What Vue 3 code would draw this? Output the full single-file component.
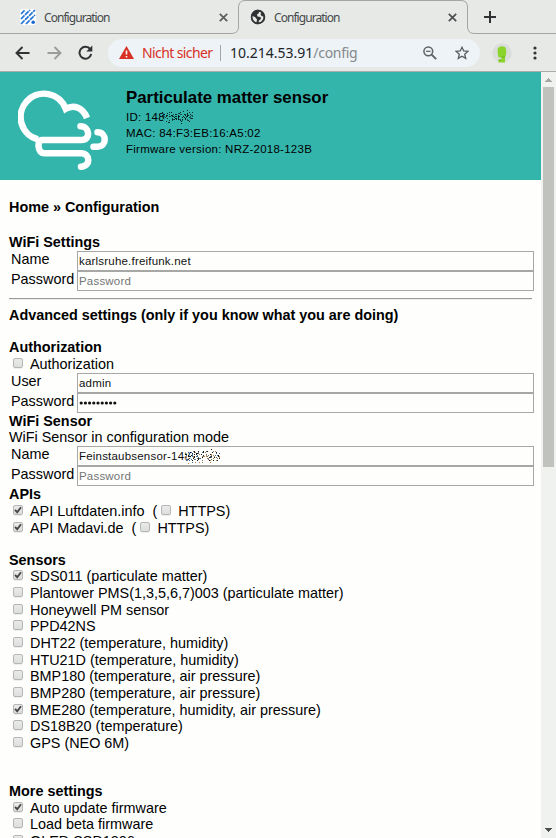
<script setup>
const sensors = [
  { label: 'SDS011 (particulate matter)', on: true },
  { label: 'Plantower PMS(1,3,5,6,7)003 (particulate matter)' },
  { label: 'Honeywell PM sensor' },
  { label: 'PPD42NS' },
  { label: 'DHT22 (temperature, humidity)' },
  { label: 'HTU21D (temperature, humidity)' },
  { label: 'BMP180 (temperature, air pressure)' },
  { label: 'BMP280 (temperature, air pressure)' },
  { label: 'BME280 (temperature, humidity, air pressure)', on: true },
  { label: 'DS18B20 (temperature)' },
  { label: 'GPS (NEO 6M)' },
]
const more = [
  { label: 'Auto update firmware', on: true },
  { label: 'Load beta firmware' },
  { label: 'OLED SSD1306' },
]
const apis = ['API Luftdaten.info', 'API Madavi.de']

// Speckles that hide the last digits of the device id
function speckles(w, h, count, seed, colors) {
  let s = seed
  const next = () => (s = (s * 16807) % 2147483647) / 2147483647
  return Array.from({ length: count }, () => {
    const x = Math.floor(next() * w)
    const y = Math.floor(((next() + next()) / 2) * h)
    return { x, y, c: colors[Math.floor(next() * colors.length)] }
  })
}
const headDots = speckles(31, 14, 165, 71, ['#08201e', '#0b2b28', '#34b5ac', '#17544f'])
const fieldDots = speckles(35, 15, 230, 913, ['#111', '#222', '#fff', '#fff', '#426a9a', '#b58250', '#777'])
</script>

<template>
  <div class="window">
    <div class="tabs">
      <svg class="tabline" width="556" height="34" fill="none" stroke="#a5a6a4">
        <path d="M0 33.5H232Q238.500 33 238.500 27V7Q239 .5 245 .5H461Q467.500 .5 467.500 7V27Q468 33.500 474 33.500H556" />
      </svg>
      <div class="tab first">
        <svg width="16" height="16" viewBox="0 0 16 16">
          <rect width="16" height="16" rx="2" fill="#fff" />
          <path d="M1 5L5 1M1 10L10 1M1 15L15 1M6 15L15 6" stroke="#2374d5" stroke-width="1.700" stroke-dasharray="5 .7" />
          <circle cx="13.200" cy="13.200" r="1.800" fill="#1769d0" />
        </svg>
        <span class="tabtitle">Configuration</span>
        <svg class="close" width="9" height="9" viewBox="0 0 9 9"><path d="M.8.8L8.200 8.200M8.200.8L.8 8.200" stroke="#5b5d5d" stroke-width="1.700" /></svg>
      </div>
      <div class="tab second">
        <svg width="16" height="16" viewBox="0 0 16 16">
          <circle cx="8" cy="8" r="7.200" fill="#303234" />
          <path d="M8.800 2.200L9 4L7 5.500L7.500 7.500L10.500 8L11 10L9 11.500L8.500 13.500L11 13L13.500 10V7.500L11.500 7L10.500 5L11.500 3.500ZM2 7L5 8L7 10.500L6.500 13.500L4 12.500L2.200 9.500Z" fill="#e7e9e6" />
          <circle cx="8" cy="8" r="6.400" fill="none" stroke="#303234" stroke-width="1.600" />
        </svg>
        <span class="tabtitle">Configuration</span>
        <svg class="close" width="9" height="9" viewBox="0 0 9 9"><path d="M.8.8L8.200 8.200M8.200.8L.8 8.200" stroke="#4c4e4f" stroke-width="1.700" /></svg>
      </div>
      <svg class="plus" width="12" height="12"><path d="M6 0V12M0 6H12" stroke="#303234" stroke-width="2" /></svg>
    </div>

    <div class="toolbar">
      <svg class="nav" width="15" height="14" viewBox="0 0 15 14" fill="none" stroke="#303234" stroke-width="1.900"><path d="M14.500 7H1.500M7.500 1L1.500 7L7.500 13" /></svg>
      <svg class="nav fwd" width="15" height="14" viewBox="0 0 15 14" fill="none" stroke="#9b9d9b" stroke-width="1.900"><path d="M.5 7H13.500M7.500 1L13.500 7L7.500 13" /></svg>
      <svg class="nav reload" width="15" height="15" viewBox="0 0 15 15"><path d="M12.300 4.400A5.900 5.900 0 1 0 13.200 9" fill="none" stroke="#303234" stroke-width="2" /><path d="M14.300.5V6.500H8.300Z" fill="#303234" /></svg>
      <div class="omnibox">
        <svg width="15" height="13" viewBox="0 0 15 13"><path d="M7.500 0L15 13H0Z" fill="#d93025" /><path d="M7.500 4.500V8.500M7.500 10V11.500" stroke="#fff" stroke-width="1.600" /></svg>
        <span class="warn">Nicht sicher</span>
        <span class="divider"></span>
        <span class="url">10.214.53.91<span>/config</span></span>
        <svg class="lens" width="14" height="14" viewBox="0 0 14 14" fill="none" stroke="#5f6263" stroke-width="1.500"><circle cx="5.300" cy="5.300" r="4.400" /><path d="M3 5.300H7.600" stroke-width="1.200" /><path d="M8.600 8.600L13.200 13.200" stroke-width="1.900" /></svg>
        <svg class="star" width="14" height="14" viewBox="0 0 14 14"><path d="M7 1.300L8.700 5L12.900 5.400L9.700 8.200L10.700 12.400L7 10.200L3.300 12.400L4.300 8.200L1.100 5.400L5.300 5Z" fill="none" stroke="#5a5d5e" stroke-width="1.300" /></svg>
      </div>
      <svg class="avatar" width="20" height="20" viewBox="0 0 20 20"><circle cx="10" cy="10" r="9.700" fill="#dbddda" /><path d="M7 4Q10 2.500 13 4Q14.700 6 14.300 9Q14.500 12 13 14V19.500H6.500V17L9.500 16V14.500H6.500Q5.400 9 5.500 6Z" fill="#8bd42b" /><path d="M9.500 14H13M6.500 17H9" stroke="#59a616" stroke-width=".7" /></svg>
      <svg class="dots" width="4" height="14" fill="#303234"><circle cx="2" cy="2" r="1.600" /><circle cx="2" cy="7" r="1.600" /><circle cx="2" cy="12" r="1.600" /></svg>
    </div>

    <div class="viewport">
      <div class="page">
        <header>
          <svg class="logo" width="92" height="84" viewBox="0 0 92 84" fill="none" stroke="#fff" stroke-width="6.500">
            <path d="M20 50.500A23.300 23.300 0 1 1 47.800 19.800C56 15 65 19 69 29" />
            <path d="M62.500 37.300C72 37.300 73 51 63.500 51H24C19 51 19 64.300 26.500 64.300H63C72.500 64.300 73 77.700 63 77.700" stroke-linecap="round" />
            <path d="M18.500 49L22 52L18.500 55Z" fill="#fff" stroke="none" />
            <path d="M79.500 43.300C89.200 43.300 89.200 57.700 79.500 57.700H75.500" stroke-linecap="round" />
          </svg>
          <div class="info">
            <h1>Particulate matter sensor</h1>
            <p>ID: 148<svg class="noise" width="31" height="14"><rect v-for="(d, i) in headDots" :key="i" :x="d.x" :y="d.y" width="1" height="1" :fill="d.c" /></svg></p>
            <p>MAC: 84:F3:EB:16:A5:02</p>
            <p>Firmware version: NRZ-2018-123B</p>
          </div>
        </header>
        <main>
          <b class="line crumb">Home » Configuration</b>
          <b class="line">WiFi Settings</b>
          <div class="fields">
            <label>Name</label><div class="field">karlsruhe.freifunk.net</div>
            <label>Password</label><div class="field hint">Password</div>
          </div>
          <div class="rule"></div>
          <b class="line advanced">Advanced settings (only if you know what you are doing)</b>
          <b class="line">Authorization</b>
          <div class="line check"><i class="box"></i><span>Authorization</span></div>
          <div class="fields">
            <label>User</label><div class="field">admin</div>
            <label>Password</label><div class="field"><svg width="40" height="8"><circle v-for="n in 9" :key="n" :cx="n * 4.200 - 2" cy="4" r="1.600" fill="#111" /></svg></div>
          </div>
          <b class="line short">WiFi Sensor</b>
          <div class="line">WiFi Sensor in configuration mode</div>
          <div class="fields">
            <label>Name</label><div class="field">Feinstaubsensor-148<svg class="noise wide" width="35" height="15"><rect v-for="(d, i) in fieldDots" :key="i" :x="d.x" :y="d.y" width="1" height="1" :fill="d.c" /></svg></div>
            <label>Password</label><div class="field hint">Password</div>
          </div>
          <b class="line">APIs</b>
          <div v-for="a in apis" :key="a" class="line check">
            <i class="box on"><svg width="10" height="10" viewBox="0 0 10 10"><path d="M2 4.800L4.200 7.200L8 2.200" /></svg></i><span>{{ a }}</span><span class="paren">(</span><i class="box"></i><span>HTTPS)</span>
          </div>
          <b class="line short sensors">Sensors</b>
          <div class="list">
            <div v-for="s in sensors" :key="s.label" class="line check">
              <i class="box" :class="{ on: s.on }"><svg v-if="s.on" width="10" height="10" viewBox="0 0 10 10"><path d="M2 4.800L4.200 7.200L8 2.200" /></svg></i><span>{{ s.label }}</span>
            </div>
          </div>
          <b class="line more">More settings</b>
          <div class="list tail">
            <div v-for="s in more" :key="s.label" class="line check">
              <i class="box" :class="{ on: s.on }"><svg v-if="s.on" width="10" height="10" viewBox="0 0 10 10"><path d="M2 4.800L4.200 7.200L8 2.200" /></svg></i><span>{{ s.label }}</span>
            </div>
          </div>
        </main>
      </div>
      <div class="scrollbar">
        <svg width="7" height="4" viewBox="0 0 7 4"><path d="M3 0H4V1H5V2H6V3H7V4H0V3H1V2H2V1H3Z" fill="#a5a7a4" /></svg>
        <div class="thumb"></div>
        <svg class="down" width="7" height="4" viewBox="0 0 7 4"><path d="M0 0H7V1H6V2H5V3H4V4H3V3H2V2H1V1H0Z" fill="#4e504f" /></svg>
      </div>
    </div>
  </div>
</template>

<style>
body { margin: 0; overflow: hidden; }
</style>
<style scoped>
* { box-sizing: border-box; }
svg { display: block; flex: none; }
.window { width: 556px; height: 838px; overflow: hidden; background: #e7e9e6; display: flex; flex-direction: column; font-family: "Liberation Sans", Arial, sans-serif; color: #000; }
.tabs { position: relative; height: 34px; flex: none; display: flex; align-items: center; font-family: "Noto Sans", sans-serif; font-size: 12px; color: #45484a; }
.tabline { position: absolute; left: 0; top: 0; }
.tab { display: flex; align-items: center; height: 34px; }
.first { width: 208px; margin-left: 20px; }
.second { width: 207px; margin-left: 22px; }
.tabtitle { margin-left: 8px; letter-spacing: -0.95px; }
.close { margin-left: auto; }
.plus { margin-left: 27px; }
.toolbar { height: 38px; flex: none; display: flex; align-items: center; padding-left: 15px; border-bottom: 1px solid #aaaca9; font-family: "Noto Sans", sans-serif; }
.fwd { margin-left: 17px; }
.reload { margin-left: 16px; margin-right: 1px; }
.omnibox { margin-left: 14px; width: 372px; height: 28px; border-radius: 14px; background: #edf3f6; display: flex; align-items: center; padding-left: 11px; font-size: 14px; color: #202326; white-space: nowrap; }
.warn { width: 78px; margin-left: 8px; color: #d93025; letter-spacing: -0.6px; }
.divider { width: 1px; height: 16px; background: #a3a6a8; }
.url { margin-left: 9px; width: 193px; }
.url span { color: #85898c; letter-spacing: -0.3px; }
.star { margin-left: 18px; }
.avatar { margin-left: 12px; }
.dots { margin-left: 21px; }
.viewport { flex: 1; display: flex; min-height: 0; }
.page { width: 541px; background: #fefffd; overflow: hidden; }
header { height: 108px; background: #34b5ac; display: flex; }
.logo { margin: 17px 0 0 18px; }
.info { margin: 15px 0 0 16px; }
h1 { margin: 0; font-size: 16.85px; line-height: 22px; height: 22px; white-space: nowrap; }
p { margin: 0; font-size: 11.5px; letter-spacing: 0.25px; line-height: 16px; height: 16px; display: flex; align-items: center; }
.noise { margin-left: -3px; }
.wide { margin-left: -6px; }
main { padding: 19px 7px 0 9px; font-size: 14.4px; }
.line { display: block; height: 17px; line-height: 17px; white-space: nowrap; }
.crumb { margin-bottom: 18px; }
.short { height: 16px; }
.fields { display: grid; grid-template-columns: 66px 457px; grid-template-rows: 20px 20px; padding-left: 2px; line-height: 17px; }
.field { height: 20px; border: 1px solid #a7a7a6; padding-left: 1px; font-size: 11.5px; letter-spacing: 0.2px; line-height: 18px; display: flex; align-items: center; color: #111; }
.hint { color: #757575; }
.rule { height: 2px; width: 523px; margin: 7px 0; border-top: 1px solid #999; border-bottom: 1px solid #eee; }
.advanced { margin-bottom: 15px; }
.fields + .short + .line { margin-bottom: 1px; height: 16px; }
.check { display: flex; align-items: flex-start; }
.box { width: 10px; height: 10px; margin: 2px 7px 0 4px; flex: none; border: 1px solid #b5b6b5; border-radius: 2px; background: linear-gradient(#e9eae9, #dddfdd); box-shadow: 0 1px 0 #eee; }
.box svg { margin: -1px; fill: none; stroke: #484848; stroke-width: 1.9; }
.paren { margin-left: 8px; }
.sensors { margin-top: 15px; }
.list .line:nth-child(3n) { height: 16px; }
.more { margin-top: 31px; }
.tail .line:nth-child(1) { height: 16px; }
.scrollbar { width: 15px; background: #f0f2ef; display: flex; flex-direction: column; align-items: center; padding: 6px 0; }
.thumb { width: 11px; height: 380px; margin-top: 5px; background: #c0c2bd; }
.down { margin-top: auto; }
</style>
